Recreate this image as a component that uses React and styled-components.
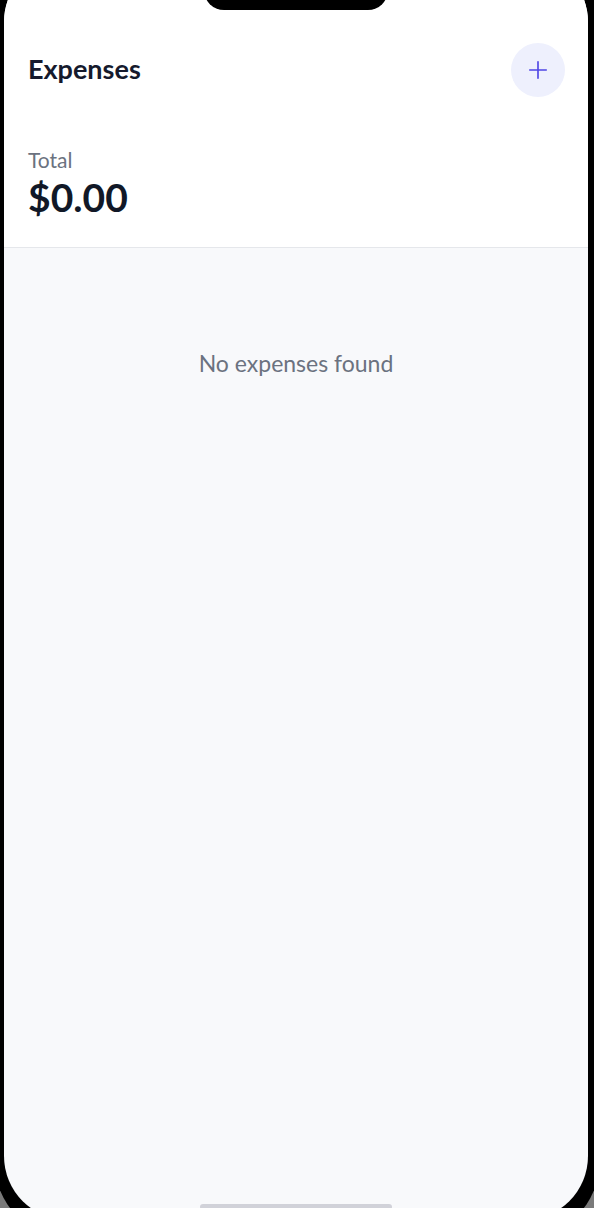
import React from "react";
import styled, { createGlobalStyle } from "styled-components";

const GlobalStyle = createGlobalStyle`
  html, body {
    margin: 0;
    padding: 0;
    background: #7a7a7a;
    overflow: hidden;
    font-family: "Lato", "Open Sans", sans-serif;
  }
  * {
    box-sizing: border-box;
  }
`;

function App() {
  const expenses = [];
  const total = expenses.reduce((sum, e) => sum + e.amount, 0);

  return (
    <>
      <GlobalStyle />
      <Frame>
        <Island />
        <Screen>
          <Header>
            <TitleRow>
              <Title>Expenses</Title>
              <AddButton aria-label="Add expense">
                <svg width="22" height="22" viewBox="0 0 24 24" fill="none">
                  <path
                    d="M12 3v18M3 12h18"
                    stroke="#4f46e5"
                    strokeWidth="1.8"
                    strokeLinecap="round"
                  />
                </svg>
              </AddButton>
            </TitleRow>
            <TotalBlock>
              <TotalLabel>Total</TotalLabel>
              <TotalAmount>${total.toFixed(2)}</TotalAmount>
            </TotalBlock>
          </Header>
          <List>
            {expenses.length === 0 && <Empty>No expenses found</Empty>}
          </List>
          <HomeIndicator />
        </Screen>
      </Frame>
    </>
  );
}

export default App;

const Frame = styled.div`
  position: relative;
  width: 606px;
  height: 1290px;
  margin-top: -50px;
  margin-left: -6px;
  padding: 8px 12px 0 10px;
  background: #000;
  border-radius: 80px;
`;

const Island = styled.div`
  position: absolute;
  top: 20px;
  left: 210px;
  width: 184px;
  height: 40px;
  background: #000;
  border-radius: 20px;
  z-index: 5;
`;

const Screen = styled.div`
  position: relative;
  width: 584px;
  height: 1262px;
  border-radius: 64px;
  background: #f8f9fb;
  overflow: hidden;
  display: flex;
  flex-direction: column;
`;

const Header = styled.header`
  background: #fff;
  border-bottom: 1px solid #e5e7eb;
  padding: 84px 23px 29px 24px;
`;

const TitleRow = styled.div`
  display: flex;
  align-items: center;
  justify-content: space-between;
  height: 54px;
  margin-top: 1px;
`;

const Title = styled.h1`
  margin: 0 0 4px;
  font-size: 27px;
  font-weight: 700;
  color: #151a2d;
`;

const AddButton = styled.button`
  width: 54px;
  height: 54px;
  border: none;
  border-radius: 50%;
  background: #eef0fd;
  display: flex;
  align-items: center;
  justify-content: center;
  padding: 0;
  cursor: pointer;
`;

const TotalBlock = styled.div`
  margin-top: 51px;
  display: flex;
  flex-direction: column;
`;

const TotalLabel = styled.span`
  font-size: 21px;
  line-height: 24px;
  color: #6b7280;
`;

const TotalAmount = styled.span`
  margin-top: 4px;
  font-size: 39px;
  line-height: 42px;
  font-weight: 700;
  color: #111827;
`;

const List = styled.div`
  flex: 1;
  padding-top: 103px;
`;

const Empty = styled.p`
  margin: 0;
  text-align: center;
  font-size: 23px;
  line-height: 24px;
  color: #6b7280;
`;

const HomeIndicator = styled.div`
  position: absolute;
  left: 196px;
  bottom: 10px;
  width: 192px;
  height: 6px;
  border-radius: 3px;
  background: #d1d2d9;
`;
